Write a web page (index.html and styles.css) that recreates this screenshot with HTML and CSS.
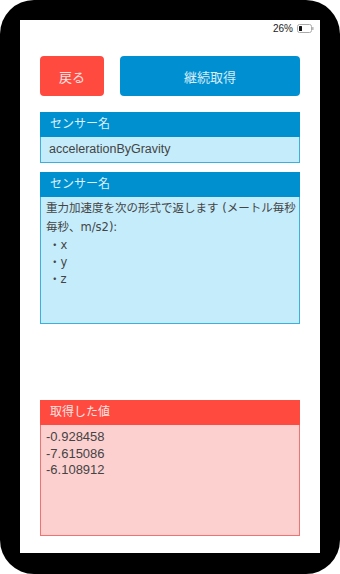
FILE: index.html
```html
<!DOCTYPE html>
<html lang="ja">
<head>
    <meta charset="UTF-8">
    <meta name="viewport" content="width=device-width, initial-scale=1.0">
    <title>センサー</title>
    <link rel="stylesheet" href="styles.css">
</head>
<body>
    <div class="phone">
        <div class="screen">
            <div class="status-bar">
                <span class="battery-text">26%</span>
                <svg class="battery" width="17" height="9" viewBox="0 0 17 9">
                    <rect x="0.5" y="0.5" width="14" height="8" rx="2" fill="#fff" stroke="#aaa"/>
                    <rect x="2" y="2" width="3" height="5" rx="0.5" fill="#111"/>
                    <rect x="15.2" y="3" width="1.3" height="3" rx="0.5" fill="#aaa"/>
                </svg>
            </div>
            <div class="content">
                <div class="buttons">
                    <button class="btn btn-back">戻る</button>
                    <button class="btn btn-get">継続取得</button>
                </div>
                <div class="panel panel-name">
                    <div class="panel-title">センサー名</div>
                    <div class="panel-body">accelerationByGravity</div>
                </div>
                <div class="panel panel-desc">
                    <div class="panel-title">センサー名</div>
                    <div class="panel-body">
                        <p class="desc">重力加速度を次の形式で返します (メートル毎秒<br>毎秒、m/s2):</p>
                        <ul class="axis-list">
                            <li>・x</li>
                            <li>・y</li>
                            <li>・z</li>
                        </ul>
                    </div>
                </div>
                <div class="panel panel-result">
                    <div class="panel-title">取得した値</div>
                    <div class="panel-body">
                        <div>-0.928458</div>
                        <div>-7.615086</div>
                        <div>-6.108912</div>
                    </div>
                </div>
            </div>
        </div>
    </div>
</body>
</html>
```

FILE: styles.css
```css
body {
    margin: 0;
    padding: 0;
    background-color: #ffffff;
    font-family: "Liberation Sans", "Noto Sans CJK JP", sans-serif;
    color: #444;
}
.phone {
    width: 340px;
    height: 574px;
    box-sizing: border-box;
    padding: 20px 20px 21px;
    background-color: #000;
    border-radius: 34px;
}
.screen {
    height: 100%;
    background-color: #fff;
    display: flex;
    flex-direction: column;
}
.status-bar {
    height: 16px;
    display: flex;
    justify-content: flex-end;
    align-items: center;
    gap: 4px;
    padding: 0 6px;
}
.battery-text {
    font-size: 10px;
    color: #222;
}
.battery {
    display: block;
}
.content {
    padding: 0 20px;
}
.buttons {
    display: flex;
    gap: 16px;
    margin-top: 20px;
}
.btn {
    height: 40px;
    border: none;
    border-radius: 4px;
    font-family: inherit;
    font-size: 13px;
    color: #f3f3f3;
    padding: 0;
    cursor: pointer;
}
.btn-back {
    width: 64px;
    background-color: #ff4a40;
    color: #fbe2e0;
}
.btn-get {
    flex: 1;
    background-color: #0090d2;
    color: #d6ecf8;
}
.panel-title {
    height: 25px;
    line-height: 25px;
    padding-left: 10px;
    font-size: 12px;
    background-color: #0090d0;
    color: #dcf0fb;
}
.panel-body {
    background-color: #c4ecfb;
    border: 1px solid #3ab0e0;
    border-top: none;
    box-sizing: border-box;
}
.panel-name {
    margin-top: 16px;
}
.panel-name .panel-body {
    height: 26px;
    line-height: 25px;
    padding-left: 8px;
    font-size: 12.5px;
}
.panel-desc {
    margin-top: 9px;
}
.panel-desc .panel-body {
    height: 127px;
    padding: 2px 0 0 5px;
    font-family: "DejaVu Sans", "Noto Sans CJK JP", sans-serif;
    font-size: 11.5px;
}
.desc {
    margin: 0;
    line-height: 19px;
}
.axis-list {
    list-style: none;
    margin: 0;
    padding: 0 0 0 3px;
    line-height: 16.8px;
}
.panel-result {
    margin-top: 76px;
}
.panel-result .panel-title {
    background-color: #ff4a40;
    color: #fde3e1;
}
.panel-result .panel-body {
    height: 111px;
    padding: 4px 0 0 5px;
    background-color: #fdd0d0;
    border-color: #f27272;
    font-size: 13px;
    line-height: 16.6px;
}
```
